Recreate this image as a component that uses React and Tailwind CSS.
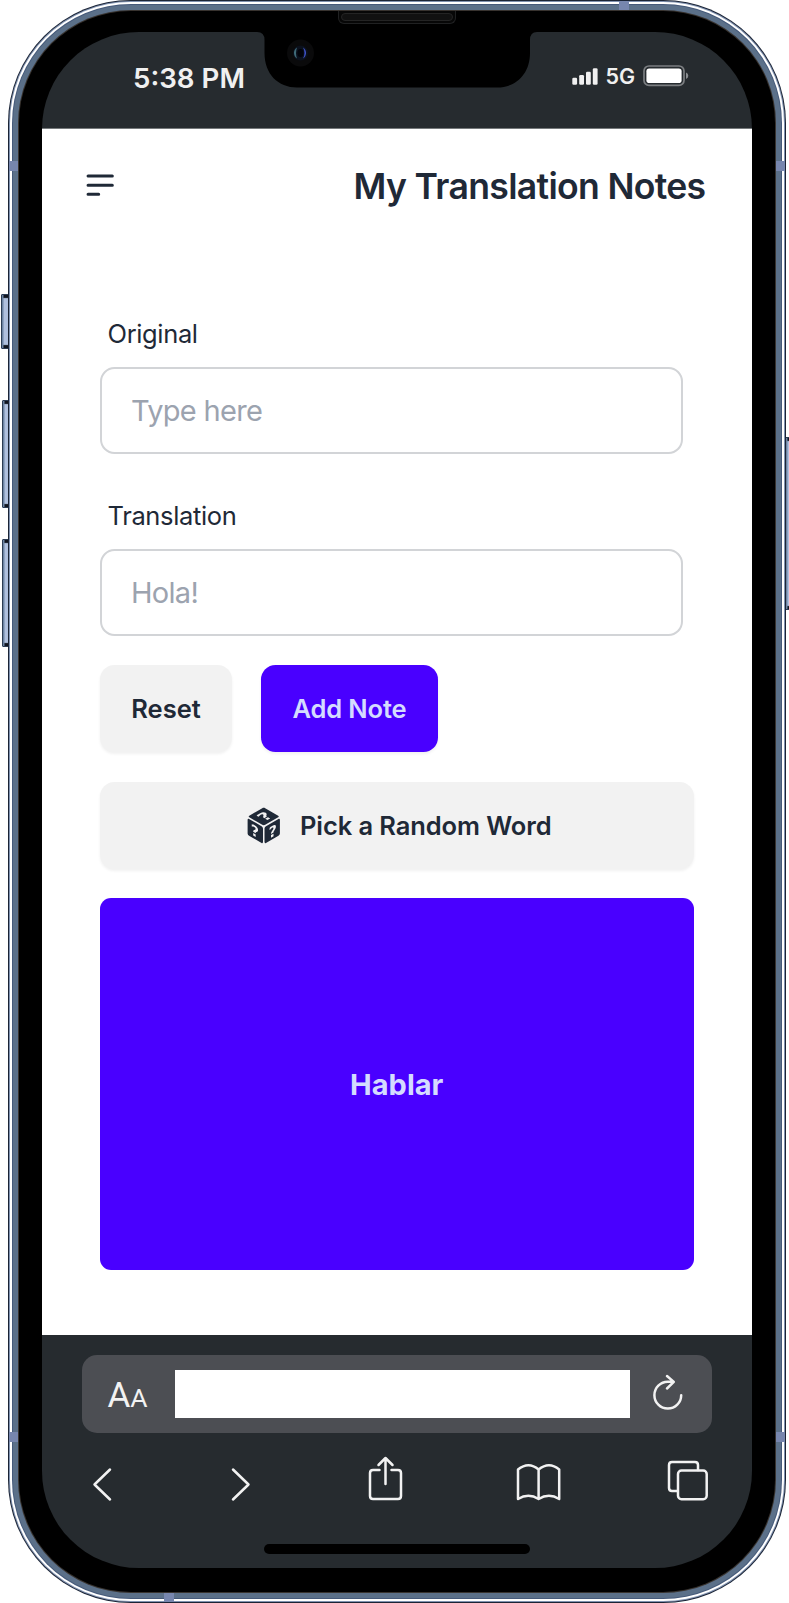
import React from "react";
import { GiPerspectiveDiceSixFacesRandom } from "react-icons/gi";

function SideButton({ className }) {
  return (
    <div
      className={`absolute rounded-[1px] border border-[#2c3c54] bg-[#b0c0de] shadow-[inset_1.500px_0_0_#6d84a3,inset_0_3px_1px_#10141f,inset_0_-3px_1px_#10141f] ${className}`}
    />
  );
}

function StatusBar() {
  return (
    <div className="relative flex h-[97px] shrink-0 items-start justify-between border-b border-[#75797b] bg-[#262b2f] pr-[63px] pl-[91px]">
      <div className="mt-[28px] text-[27.700px] leading-[36px] font-semibold whitespace-nowrap text-[#f0f0f0]">
        5:38 PM
      </div>
      <div className="mt-[32px] flex h-[24px] items-center">
        <svg className="h-[17px] w-[26px]" viewBox="0 0 26 17" fill="#f0f0f0">
          <rect x="0.3" y="9.7" width="4.8" height="7" rx="1.3" />
          <rect x="7.2" y="7" width="4.8" height="9.7" rx="1.3" />
          <rect x="14" y="3.8" width="4.8" height="12.9" rx="1.3" />
          <rect x="20.8" y="0.3" width="4.8" height="16.4" rx="1.3" />
        </svg>
        <div className="ml-[8px] w-[30px] text-[21.500px] leading-[24px] font-semibold whitespace-nowrap text-[#f0f0f0]">
          5G
        </div>
        <svg className="ml-[7px] h-[22px] w-[46px]" viewBox="0 0 46 22">
          <rect x="1" y="1" width="40" height="19.4" rx="5" fill="none" stroke="#7b7e81" strokeWidth="1.7" />
          <rect x="3.4" y="3.4" width="35.2" height="14.6" rx="2.8" fill="#fff" />
          <path d="M43 7.500v6.600q2.300-1 2.300-3.300T43 7.500z" fill="#8b8e91" />
        </svg>
      </div>
      <Notch />
    </div>
  );
}

function Notch() {
  return (
    <svg className="absolute -top-[1px] left-[213px] h-[58px] w-[284px]" viewBox="0 0 284 58">
      <path
        d="M0 0H284V1H282Q275 1 275 9V22C275 43 261 56.500 242 56.500H42C23 56.500 9.500 43 9.500 22V9Q9.500 1 2 1H0Z"
        fill="#000"
      />
      <circle cx="45.500" cy="22" r="13.500" fill="#0a0a0b" />
      <circle cx="45.500" cy="22" r="7.500" fill="#0b111d" />
      <path d="M42 16.500a6.500 6.500 0 0 0 0 11q-2-5.500 0-11z" fill="#3f6a78" />
      <path d="M48 16.500a6.500 6.500 0 0 1 0 11q3-5.500 0-11z" fill="#3d50c4" />
      <ellipse cx="45.500" cy="22" rx="3" ry="4" fill="#02030a" />
    </svg>
  );
}

function Header() {
  return (
    <header className="flex h-[112px] items-center justify-between pr-[46px] pl-[39.500px]">
      <svg className="h-[36.400px] w-[36.400px]" viewBox="0 0 24 24" fill="none" stroke="#1f2937" strokeWidth="2" strokeLinecap="round">
        <path d="M4 6h16M4 12h16M4 18h7" />
      </svg>
      <h1 className="mt-[4px] text-[35.600px] leading-[50px] font-semibold tracking-[-0.680px] whitespace-nowrap text-[#1f2937]">
        My Translation Notes
      </h1>
    </header>
  );
}

function Field({ label, placeholder }) {
  return (
    <label className="flex h-[182px] w-[582.500px] flex-col">
      <span className="flex h-[66px] items-center px-[7.500px] pt-[1px] text-[25.500px] tracking-[-0.360px] whitespace-nowrap text-[#1f2937]">
        {label}
      </span>
      <input
        className="h-[87px] w-full rounded-[14.500px] border-2 border-[#d2d4d7] bg-white px-[29px] text-[29px] tracking-[-0.700px] text-[#1f2937] outline-none placeholder:text-[#9ca3af]"
        placeholder={placeholder}
      />
    </label>
  );
}

const buttonBase =
  "flex h-[87px] items-center justify-center rounded-[14.500px] text-[25.500px] font-semibold whitespace-nowrap shadow-[0_2px_3px_rgba(0,0,0,0.06)]";

function Page() {
  return (
    <main className="flex h-[1206px] shrink-0 flex-col bg-white">
      <Header />
      <form className="mt-[60px] flex flex-col px-[58px]">
        <Field label="Original" placeholder="Type here" />
        <Field label="Translation" placeholder="Hola!" />
        <div className="flex gap-[29px]">
          <button type="button" className={`${buttonBase} w-[132px] bg-[#f2f2f2] pt-[2px] text-[#1f2937]`}>
            Reset
          </button>
          <button
            type="button"
            className={`${buttonBase} w-[177px] bg-[#4900ff] pt-[2px] tracking-[-0.120px] text-[#d4dbff]`}
          >
            Add Note
          </button>
        </div>
        <button
          type="button"
          className={`${buttonBase} mt-[30px] w-[593.500px] gap-[14.500px] bg-[#f2f2f2] tracking-[-0.100px] text-[#1f2937]`}
        >
          <GiPerspectiveDiceSixFacesRandom className="size-[43.500px]" />
          <span className="pt-[1.500px]">Pick a Random Word</span>
        </button>
        <div className="mt-[29px] flex h-[371.500px] w-[593.500px] items-center justify-center rounded-[11px] bg-[#4900ff] pt-[2px] text-[29px] font-bold text-[#d4dbff]">
          Hablar
        </div>
      </form>
    </main>
  );
}

const iconProps = {
  fill: "none",
  stroke: "#f2f2f2",
  strokeWidth: "2.500",
  strokeLinecap: "round",
  strokeLinejoin: "round",
};

function BrowserBar() {
  return (
    <footer className="flex flex-1 flex-col items-center bg-[#262b2f] pt-[20px]">
      <div className="flex h-[78px] w-[629.500px] items-center rounded-[15px] bg-[#4c4e53] pl-[26px] text-[#f2f2f2]">
        <div className="mt-[5px] -ml-[0.500px] flex w-[67.500px] items-baseline gap-[1px] font-['Roboto','Inter',sans-serif] leading-[40px]">
          <span className="text-[35px] tracking-[-1px]">A</span>
          <span className="text-[26.500px]">A</span>
        </div>
        <div className="h-[48px] w-[455px] bg-white" />
        <svg className="mb-[5px] ml-[22px] h-[38px] w-[32px]" viewBox="0 0 32 38" {...iconProps}>
          <path d="M29.200 22.200A13.400 13.400 0 1 1 15.800 8.800H21.500M15 3L21.800 8.900L15 15.500" />
        </svg>
      </div>
      <nav className="mt-[20px] ml-[49.500px] flex h-[52px] items-start self-start">
        <svg className="mt-[14px] h-[36px] w-[20px]" viewBox="0 0 20 36" {...iconProps}>
          <path d="M18 2.500L2.500 17.500L18 32.500" />
        </svg>
        <svg className="mt-[14px] ml-[119.500px] h-[36px] w-[20px]" viewBox="0 0 20 36" {...iconProps}>
          <path d="M2 2.500L17.500 17.500L2 32.500" />
        </svg>
        <svg className="mt-[3px] ml-[117px] h-[46px] w-[36px]" viewBox="0 0 36 46" {...iconProps}>
          <path d="M11.500 14H5Q2 14 2 17V40Q2 43 5 43H30Q33 43 33 40V17Q33 14 30 14H23.500M17.500 28V2M10.500 9L17.500 2L24.500 9" />
        </svg>
        <svg className="mt-[10px] ml-[111.500px] h-[40px] w-[46px]" viewBox="0 0 46 40" {...iconProps}>
          <path d="M22.600 6.500V35.500M22.600 6.500Q12.500-2 2 6.500V36Q12.500 29.500 22.600 36Q33 29.500 43.200 36V6.500Q33-2 22.600 6.500" />
        </svg>
        <svg className="mt-[7px] ml-[105.500px] h-[42px] w-[42px]" viewBox="0 0 42 42" {...iconProps}>
          <rect x="11" y="10.500" width="28.700" height="28.700" rx="3.500" />
          <path d="M10.500 31H5Q2 31 2 28V5Q2 2 5 2H28Q31 2 31 5V10" />
        </svg>
      </nav>
      <div className="mt-[39px] h-[10px] w-[266px] rounded-full bg-black" />
    </footer>
  );
}

export default function App() {
  return (
    <div className="relative h-[1603px] w-[789px] overflow-hidden bg-white font-['Inter','Liberation_Sans',sans-serif]">
      <SideButton className="top-[294px] left-[1px] h-[55px] w-[9px]" />
      <SideButton className="top-[400px] left-[2px] h-[108px] w-[8px]" />
      <SideButton className="top-[539px] left-[2px] h-[108px] w-[8px]" />
      <SideButton className="top-[437px] left-[785px] h-[173px] w-[8px]" />

      <div className="relative ml-[8px] h-[1603px] w-[777.500px] rounded-[123px] bg-[#1b2435] p-px">
        <div className="h-full rounded-[122px] bg-[#8092b0] p-px">
          <div className="h-full rounded-[121px] bg-white p-[2px]">
            <div className="h-full rounded-[119px] bg-[#465a7a] p-px">
              <div className="h-full rounded-[118px] bg-[#5b7089] p-[5px]">
                <div className="h-full rounded-[113px] bg-[#38332f] p-px">
                  <div className="h-full rounded-[112px] bg-black px-[23px] pt-[21px] pb-[24.500px]">
                    <div className="flex h-full flex-col overflow-hidden rounded-[97px]">
                      <StatusBar />
                      <Page />
                      <BrowserBar />
                    </div>
                  </div>
                </div>
              </div>
            </div>
          </div>
        </div>
        <div className="absolute top-[161px] left-[1px] h-[10px] w-[9px] bg-[#7786ae]" />
        <div className="absolute top-[161px] right-[1px] h-[10px] w-[9px] bg-[#7786ae]" />
        <div className="absolute top-[1432px] left-[1px] h-[10px] w-[9px] bg-[#7786ae]" />
        <div className="absolute top-[1432px] right-[1px] h-[10px] w-[9px] bg-[#7786ae]" />
        <div className="absolute top-px left-[611px] h-[9px] w-[10px] bg-[#7786ae]" />
        <div className="absolute bottom-px left-[156px] h-[9px] w-[10px] bg-[#7786ae]" />
        <div className="absolute top-[11px] left-[330px] h-[13px] w-[118px] rounded-b-[6px] border border-t-0 border-[#202122] bg-[#070707] p-[2px]">
          <div className="h-[8px] rounded-full border border-[#242424] bg-[#111]" />
        </div>
      </div>
    </div>
  );
}
